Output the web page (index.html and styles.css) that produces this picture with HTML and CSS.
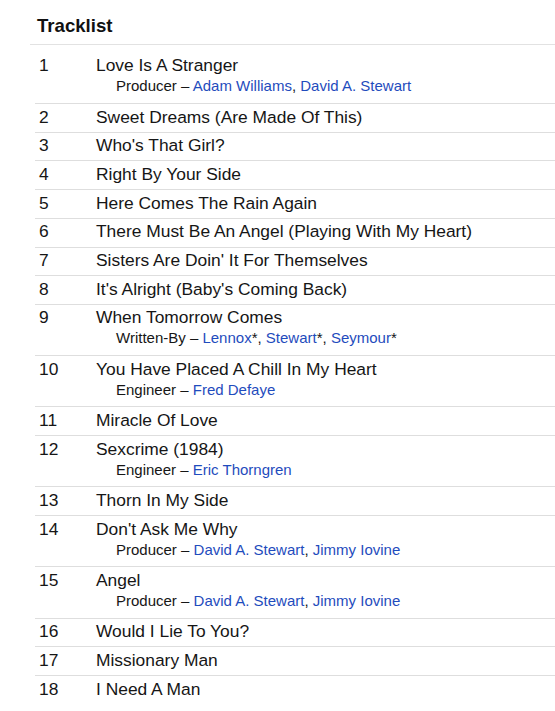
FILE: index.html
```html
<!DOCTYPE html>
<html>
<head>
<meta charset="utf-8">
<link rel="stylesheet" href="styles.css">
</head>
<body>
<section class="tracklist">
  <h2 class="heading">Tracklist</h2>
  <div class="tracks">
    <div class="track">
      <div class="pos">1</div>
      <div class="info">
        <div class="title">Love Is A Stranger</div>
        <div class="credit">Producer – <a href="#">Adam Williams</a>, <a href="#">David A. Stewart</a></div>
      </div>
    </div>
    <div class="track"><div class="pos">2</div><div class="info"><div class="title">Sweet Dreams (Are Made Of This)</div></div></div>
    <div class="track"><div class="pos">3</div><div class="info"><div class="title">Who's That Girl?</div></div></div>
    <div class="track"><div class="pos">4</div><div class="info"><div class="title">Right By Your Side</div></div></div>
    <div class="track"><div class="pos">5</div><div class="info"><div class="title">Here Comes The Rain Again</div></div></div>
    <div class="track"><div class="pos">6</div><div class="info"><div class="title">There Must Be An Angel (Playing With My Heart)</div></div></div>
    <div class="track"><div class="pos">7</div><div class="info"><div class="title">Sisters Are Doin' It For Themselves</div></div></div>
    <div class="track"><div class="pos">8</div><div class="info"><div class="title">It's Alright (Baby's Coming Back)</div></div></div>
    <div class="track">
      <div class="pos">9</div>
      <div class="info">
        <div class="title">When Tomorrow Comes</div>
        <div class="credit">Written-By – <a href="#">Lennox</a>*, <a href="#">Stewart</a>*, <a href="#">Seymour</a>*</div>
      </div>
    </div>
    <div class="track">
      <div class="pos">10</div>
      <div class="info">
        <div class="title">You Have Placed A Chill In My Heart</div>
        <div class="credit">Engineer – <a href="#">Fred Defaye</a></div>
      </div>
    </div>
    <div class="track"><div class="pos">11</div><div class="info"><div class="title">Miracle Of Love</div></div></div>
    <div class="track">
      <div class="pos">12</div>
      <div class="info">
        <div class="title">Sexcrime (1984)</div>
        <div class="credit">Engineer – <a href="#">Eric Thorngren</a></div>
      </div>
    </div>
    <div class="track"><div class="pos">13</div><div class="info"><div class="title">Thorn In My Side</div></div></div>
    <div class="track">
      <div class="pos">14</div>
      <div class="info">
        <div class="title">Don't Ask Me Why</div>
        <div class="credit">Producer – <a href="#">David A. Stewart</a>, <a href="#">Jimmy Iovine</a></div>
      </div>
    </div>
    <div class="track">
      <div class="pos">15</div>
      <div class="info">
        <div class="title">Angel</div>
        <div class="credit">Producer – <a href="#">David A. Stewart</a>, <a href="#">Jimmy Iovine</a></div>
      </div>
    </div>
    <div class="track"><div class="pos">16</div><div class="info"><div class="title">Would I Lie To You?</div></div></div>
    <div class="track"><div class="pos">17</div><div class="info"><div class="title">Missionary Man</div></div></div>
    <div class="track"><div class="pos">18</div><div class="info"><div class="title">I Need A Man</div></div></div>
  </div>
</section>
</body>
</html>
```

FILE: styles.css
```css
html, body {
  margin: 0;
  padding: 0;
  background: #ffffff;
}

body {
  font-family: "Liberation Sans", Arial, sans-serif;
  color: #161616;
}

.tracklist {
  margin-left: 30px;
}

.heading {
  margin: 0;
  padding: 14.9px 0 7.1px 7px;
  font-size: 18.6px;
  line-height: 22px;
  font-weight: bold;
  color: #111;
  border-bottom: 1px solid #e2e2e2;
}

.tracks {
  margin: 7.8px 0 0 5px;
}

.track {
  display: grid;
  grid-template-columns: 61px 1fr;
  padding: 2.6px 0 5.1px 0;
  border-top: 1px solid #dedede;
}

.track:first-child {
  border-top: none;
}

.pos {
  padding-left: 4px;
  font-size: 17.4px;
  line-height: 20px;
}

.title {
  font-size: 17.4px;
  line-height: 20px;
}

.credit {
  padding-left: 20px;
  font-size: 15px;
  line-height: 22.6px;
  color: #161616;
}

.credit a {
  color: #1f4cbd;
  text-decoration: none;
}
```
